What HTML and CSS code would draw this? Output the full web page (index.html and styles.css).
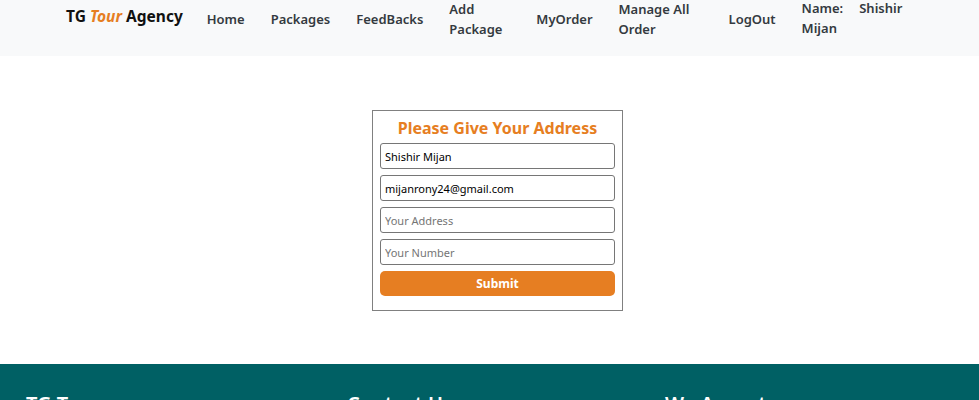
FILE: index.html
```html
<!DOCTYPE html>
<html>
<head>
<meta charset="utf-8">
<link rel="stylesheet" href="styles.css">
</head>
<body>
<nav class="navbar">
  <a class="brand">TG <i>Tour</i> Agency</a>
  <ul class="links">
    <li>Home</li>
    <li>Packages</li>
    <li>FeedBacks</li>
    <li class="w-add">Add Package</li>
    <li>MyOrder</li>
    <li class="w-manage">Manage All Order</li>
    <li>LogOut</li>
    <li class="user"><span class="name">Name:<br>Mijan</span><span class="first">Shishir</span></li>
  </ul>
</nav>
<main class="main">
  <form class="card">
    <h2 class="title">Please Give Your Address</h2>
    <input class="field" type="text" value="Shishir Mijan">
    <input class="field" type="text" value="mijanrony24@gmail.com">
    <input class="field" type="text" placeholder="Your Address">
    <input class="field" type="text" placeholder="Your Number">
    <button class="submit" type="button">Submit</button>
  </form>
</main>
<footer class="footer">
  <div class="col c1"><h3>TG Tour</h3></div>
  <div class="col c2"><h3>Contact Us</h3></div>
  <div class="col c3"><h3>We Accept</h3></div>
</footer>
</body>
</html>
```
FILE: styles.css
```css
* { box-sizing: border-box; }
body {
  margin: 0;
  font-family: "Noto Sans", "Open Sans", sans-serif;
  background: #fff;
  color: #212529;
}
.navbar {
  background: #f8f9fa;
  height: 56px;
  display: flex;
  align-items: flex-start;
  padding-left: 66px;
}
.brand {
  font-size: 15.5px;
  font-weight: 700;
  color: #111;
  line-height: 22px;
  margin-top: 5px;
  white-space: nowrap;
}
.brand i { color: #e67e22; }
.links {
  list-style: none;
  margin: 0 0 0 24px;
  padding: 0;
  display: flex;
  align-items: center;
  gap: 26px;
  height: 37px;
}
.links li {
  font-size: 13px;
  font-weight: 600;
  color: #343a40;
  line-height: 20px;
  white-space: nowrap;
}
.links li.w-add { width: 61px; white-space: normal; }
.links li.w-manage { width: 84px; white-space: normal; }
.links li.user {
  display: flex;
  align-items: flex-start;
  gap: 16px;
  align-self: flex-start;
  margin-top: -2px;
}
.main {
  height: 308px;
  display: flex;
  justify-content: center;
  align-items: flex-start;
  padding-top: 54px;
  padding-left: 16px;
}
.card {
  width: 251px;
  border: 1px solid #808080;
  padding: 7px 7px 14px;
  display: flex;
  flex-direction: column;
  gap: 6px;
}
.title {
  margin: 0 0 -1px;
  text-align: center;
  color: #e67e22;
  font-size: 16px;
  font-weight: 700;
  line-height: 20px;
}
.field {
  height: 26px;
  border: 1px solid #767676;
  border-radius: 3px;
  padding: 0 4px;
  font-family: inherit;
  font-size: 11px;
  color: #000;
}
.field::placeholder { color: #757575; }
.submit {
  height: 25px;
  border: none;
  border-radius: 5px;
  background: #e67e22;
  color: #fff;
  font-family: inherit;
  font-size: 12px;
  font-weight: 700;
}
.footer {
  background: #006064;
  height: 200px;
  display: flex;
  padding: 26px 26px 0;
  color: #fff;
}
.col.c1 { width: 321px; }
.col.c2 { width: 318px; }
.col h3 { margin: 0; font-size: 20px; font-weight: 600; }
```
